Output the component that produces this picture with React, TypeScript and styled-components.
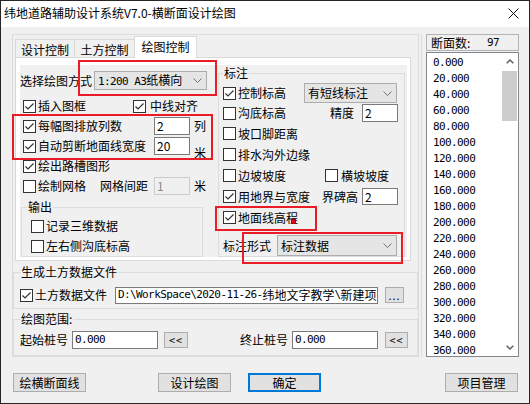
import React from "react";
import styled, { createGlobalStyle, css } from "styled-components";

const SANS = `"Noto Sans CJK SC", "Noto Sans", sans-serif`;
const MONO = `"DejaVu Sans Mono", "Liberation Mono", "Noto Sans CJK SC", monospace`;

const GlobalStyle = createGlobalStyle`
  html, body { margin: 0; padding: 0; background: #fff; }
  body { font-family: ${SANS}; font-size: 12px; color: #000; }
  *, *::before, *::after { box-sizing: border-box; }
`;

const Window = styled.div`
  position: relative;
  width: 530px;
  height: 404px;
  border: 1px solid #262626;
  background: #f0f0f0;
  display: flex;
  flex-direction: column;
  overflow: hidden;
  font-family: ${SANS};
  font-size: 12px;
  line-height: 14px;
`;

const TitleBar = styled.div`
  height: 26px;
  flex-shrink: 0;
  background: #fff;
  display: flex;
  align-items: center;
  justify-content: space-between;
  padding: 0 10px 2px 3px;
`;

const TitleText = styled.span`
  font-size: 12px;
  white-space: nowrap;
`;

const Body = styled.div`
  display: flex;
  flex-direction: column;
  padding: 7px 10px 0 11px;
`;

const Main = styled.div`
  display: flex;
  gap: 2px;
  height: 323px;
`;

const LeftFrame = styled.div`
  width: 407px;
  border: 1px solid #dcdcdc;
  display: flex;
  flex-direction: column;
`;

const TabStrip = styled.div`
  display: flex;
  align-items: flex-end;
  height: 23px;
  padding: 1px 0 0 2px;
`;

const Tab = styled.div<{ $w: number; $active?: boolean }>`
  width: ${(p) => p.$w}px;
  height: 19px;
  margin-left: -1px;
  &:first-child { margin-left: 0; }
  border: 1px solid #d9d9d9;
  border-bottom: none;
  background: #f0f0f0;
  display: flex;
  align-items: center;
  justify-content: center;
  padding-top: 1px;
  white-space: nowrap;
  ${(p) =>
    p.$active &&
    css`
      height: 22px;
      background: #fff;
      position: relative;
      z-index: 1;
      padding-top: 0;
      padding-bottom: 1px;
    `}
`;

const TabPanel = styled.div`
  margin: -1px 0 0 2px;
  width: 396px;
  border: 1px solid #d9d9d9;
  background: #fff;
  padding: 7px 3px 3px 4px;
`;

const InnerPanel = styled.div`
  display: flex;
  align-items: flex-start;
  height: 192px;
  background: #f0f0f0;
`;

const Settings = styled.div`
  width: 198px;
  display: flex;
  flex-direction: column;
  padding-top: 6px;
`;

const Rows = styled.div<{ $mt?: number; $pl?: number }>`
  display: flex;
  flex-direction: column;
  margin-top: ${(p) => p.$mt ?? 0}px;
  padding-left: ${(p) => p.$pl ?? 0}px;
`;

const Row = styled.div<{ $h?: number; $mt?: number }>`
  display: flex;
  align-items: center;
  height: ${(p) => p.$h ?? 20}px;
  margin-top: ${(p) => p.$mt ?? 0}px;
  white-space: nowrap;
`;

const Group = styled.fieldset<{ $w?: number; $h: number; $mt?: number; $ml?: number }>`
  margin: ${(p) => p.$mt ?? 0}px 0 0 ${(p) => p.$ml ?? 0}px;
  padding: 0;
  min-width: 0;
  border: 1px solid #dcdcdc;
  height: ${(p) => p.$h}px;
  ${(p) => (p.$w ? `width: ${p.$w}px;` : "")}
`;

const Legend = styled.legend<{ $ml: number }>`
  margin-left: ${(p) => p.$ml}px;
  padding: 0 1px;
  font-size: 12px;
  line-height: 12px;
  height: 12px;
  white-space: nowrap;
`;

const Label = styled.span<{ $w?: number; $ml?: number }>`
  ${(p) => (p.$w ? `width: ${p.$w}px;` : "")}
  margin-left: ${(p) => p.$ml ?? 0}px;
  flex-shrink: 0;
  white-space: nowrap;
`;

const Unit = styled.span<{ $low?: boolean }>`
  margin-left: 4px;
  ${(p) =>
    p.$low &&
    css`
      align-self: flex-end;
      margin-bottom: -4px;
    `}
`;

const CheckLabel = styled.label<{ $w?: number; $gap?: number }>`
  display: flex;
  align-items: center;
  gap: ${(p) => p.$gap ?? 2}px;
  ${(p) => (p.$w ? `width: ${p.$w}px;` : "")}
  flex-shrink: 0;
  white-space: nowrap;
`;

const Box = styled.span`
  width: 13px;
  height: 13px;
  border: 1px solid #333;
  background: #fff;
  display: inline-flex;
  align-items: center;
  justify-content: center;
  flex-shrink: 0;
`;

const Check: React.FC<{ label: string; checked?: boolean; w?: number; gap?: number }> = ({
  label,
  checked,
  w,
  gap,
}) => (
  <CheckLabel $w={w} $gap={gap}>
    <Box>
      {checked && (
        <svg width="11" height="11" viewBox="0 0 11 11">
          <polyline points="1.5,5.5 4,8 9.5,2.5" fill="none" stroke="#333" strokeWidth="1.2" />
        </svg>
      )}
    </Box>
    <span>{label}</span>
  </CheckLabel>
);

const Field = styled.div<{ $w: number; $h?: number; $disabled?: boolean }>`
  width: ${(p) => p.$w}px;
  height: ${(p) => p.$h ?? 18}px;
  flex-shrink: 0;
  border: 1px solid #7a7a7a;
  background: #fff;
  display: flex;
  align-items: center;
  padding-left: 2px;
  overflow: hidden;
  white-space: nowrap;
  ${(p) =>
    p.$disabled &&
    css`
      background: #f0f0f0;
      border-color: #cccccc;
      color: #8a8a8a;
    `}
`;

const Mono = styled.span`
  font-family: ${MONO};
  font-size: 11px;
  letter-spacing: -0.6px;
`;

const Combo = styled.div<{ $w: number; $h: number }>`
  width: ${(p) => p.$w}px;
  height: ${(p) => p.$h}px;
  flex-shrink: 0;
  border: 1px solid #adadad;
  background: #e5e5e5;
  display: flex;
  align-items: center;
  justify-content: space-between;
  padding: 0 4px 0 3px;
  white-space: nowrap;
`;

const Chevron = () => (
  <svg width="9" height="5" viewBox="0 0 9 5">
    <polyline points="0.5,0.5 4.5,4.5 8.5,0.5" fill="none" stroke="#707070" strokeWidth="1" />
  </svg>
);

const SmallButton = styled.div<{ $w: number; $h: number; $ml: number }>`
  width: ${(p) => p.$w}px;
  height: ${(p) => p.$h}px;
  margin-left: ${(p) => p.$ml}px;
  flex-shrink: 0;
  border: 1px solid #adadad;
  background: #e1e1e1;
  display: flex;
  align-items: center;
  justify-content: center;
  font-size: 11px;
  letter-spacing: 1px;
`;

const GroupContent = styled.div<{ $pl: number; $pt: number }>`
  padding-left: ${(p) => p.$pl}px;
  padding-top: ${(p) => p.$pt}px;
`;

const RightCol = styled.div`
  width: 98px;
  border-left: 1px solid #dcdcdc;
  padding-left: 4px;
  display: flex;
  flex-direction: column;
`;

const CountBox = styled.div`
  height: 17px;
  border: 1px solid #b4b4b4;
  display: flex;
  align-items: center;
  padding-left: 4px;
  flex-shrink: 0;
`;

const ListBox = styled.div`
  margin-top: 1px;
  flex: 1;
  border: 1px solid #828790;
  background: #fff;
  display: flex;
  overflow: hidden;
`;

const Items = styled.div`
  flex: 1;
  padding: 2px 0 0 6px;
  overflow: hidden;
`;

const Item = styled.div`
  height: 16px;
  display: flex;
  align-items: center;
`;

const ScrollBar = styled.div`
  width: 17px;
  display: flex;
  flex-direction: column;
  background: #fff;
`;

const ArrowBox = styled.div`
  height: 17px;
  display: flex;
  align-items: center;
  justify-content: center;
  flex-shrink: 0;
`;

const Thumb = styled.div`
  margin: 1px 1px 0 1px;
  height: 50px;
  background: #cdcdcd;
`;

const Spacer = styled.div`
  flex: 1;
`;

const ButtonRow = styled.div`
  display: flex;
  margin-top: 16px;
  padding: 0 1px;
`;

const Button = styled.div<{ $ml?: number; $auto?: boolean; $primary?: boolean }>`
  width: 73px;
  height: 19px;
  margin-left: ${(p) => (p.$auto ? "auto" : `${p.$ml ?? 0}px`)};
  border: 1px solid #adadad;
  background: #e1e1e1;
  display: flex;
  align-items: center;
  justify-content: center;
  white-space: nowrap;
  ${(p) =>
    p.$primary &&
    css`
      border: 2px solid #0078d7;
    `}
`;

const Highlight = styled.div<{ $x: number; $y: number; $w: number; $h: number }>`
  position: absolute;
  left: ${(p) => p.$x - 1}px;
  top: ${(p) => p.$y - 1}px;
  width: ${(p) => p.$w}px;
  height: ${(p) => p.$h}px;
  border: 2px solid #e81d25;
  pointer-events: none;
`;

const Dot = styled.div<{ $x: number; $y: number }>`
  position: absolute;
  left: ${(p) => p.$x - 1}px;
  top: ${(p) => p.$y - 1}px;
  width: 5px;
  height: 5px;
  background: #e0101c;
  border: 1px solid #b00010;
`;

const CloseIcon = () => (
  <svg width="11" height="11" viewBox="0 0 11 11">
    <path d="M0.5 0.5 L10.5 10.5 M10.5 0.5 L0.5 10.5" stroke="#111" strokeWidth="1" />
  </svg>
);

const stations = Array.from({ length: 19 }, (_, i) => (i * 20).toFixed(3));

export default function App() {
  return (
    <>
      <GlobalStyle />
      <Window>
        <TitleBar>
          <TitleText>纬地道路辅助设计系统V7.0-横断面设计绘图</TitleText>
          <CloseIcon />
        </TitleBar>
        <Body>
          <Main>
            <LeftFrame>
              <TabStrip>
                <Tab $w={60}>设计控制</Tab>
                <Tab $w={61}>土方控制</Tab>
                <Tab $w={63} $active>
                  绘图控制
                </Tab>
              </TabStrip>
              <TabPanel>
                <InnerPanel>
                  <Settings>
                    <Row $h={19}>
                      <Label $w={74}>选择绘图方式</Label>
                      <Combo $w={113} $h={19}>
                        <span>
                          <Mono>1:200 A3</Mono>纸横向
                        </span>
                        <Chevron />
                      </Combo>
                    </Row>
                    <Rows $mt={6} $pl={3}>
                      <Row>
                        <Check label="插入图框" checked w={110} />
                        <Check label="中线对齐" checked gap={4} />
                      </Row>
                      <Row>
                        <Check label="每幅图排放列数" checked w={131} />
                        <Field $w={36}>2</Field>
                        <Unit>列</Unit>
                      </Row>
                      <Row>
                        <Check label="自动剪断地面线宽度" checked w={131} />
                        <Field $w={36}>20</Field>
                        <Unit $low>米</Unit>
                      </Row>
                      <Row>
                        <Check label="绘出路槽图形" checked />
                      </Row>
                      <Row>
                        <Check label="绘制网格" w={77} />
                        <Label $w={54}>网格间距</Label>
                        <Field $w={36} $disabled>
                          1
                        </Field>
                        <Unit>米</Unit>
                      </Row>
                    </Rows>
                    <Group $w={182} $h={56} $mt={5} $ml={1}>
                      <Legend $ml={5}>输出</Legend>
                      <GroupContent $pl={9} $pt={3}>
                        <Row>
                          <Check label="记录三维数据" />
                        </Row>
                        <Row>
                          <Check label="左右侧沟底标高" />
                        </Row>
                      </GroupContent>
                    </Group>
                  </Settings>
                  <Group $w={187} $h={190} $mt={2}>
                    <Legend $ml={4}>标注</Legend>
                    <GroupContent $pl={4} $pt={4}>
                      <Row>
                        <Check label="控制标高" checked w={81} />
                        <Combo $w={93} $h={20}>
                          <span>有短线标注</span>
                          <Chevron />
                        </Combo>
                      </Row>
                      <Row>
                        <Check label="沟底标高" w={107} />
                        <Label $w={32}>精度</Label>
                        <Field $w={36}>2</Field>
                      </Row>
                      <Row $h={21}>
                        <Check label="坡口脚距离" />
                      </Row>
                      <Row $h={21}>
                        <Check label="排水沟外边缘" />
                      </Row>
                      <Row $h={21}>
                        <Check label="边坡坡度" w={102} />
                        <Check label="横坡坡度" gap={3} />
                      </Row>
                      <Row $h={21}>
                        <Check label="用地界与宽度" checked w={99} />
                        <Label $w={40}>界碑高</Label>
                        <Field $w={36} $h={17}>
                          2
                        </Field>
                      </Row>
                      <Row $h={21}>
                        <Check label="地面线高程" checked />
                      </Row>
                      <Row $h={21} $mt={7}>
                        <Label $w={54}>标注形式</Label>
                        <Combo $w={120} $h={21}>
                          <span>标注数据</span>
                          <Chevron />
                        </Combo>
                      </Row>
                    </GroupContent>
                  </Group>
                </InnerPanel>
              </TabPanel>
              <Group $h={43} $mt={5}>
                <Legend $ml={6}>生成土方数据文件</Legend>
                <GroupContent $pl={6} $pt={7}>
                  <Row>
                    <Check label="土方数据文件" checked w={95} />
                    <Field $w={263} $h={17}>
                      <Mono>{"D:\\WorkSpace\\2020-11-26-"}</Mono>
                      纬地文字教学
                      <Mono>{"\\"}</Mono>
                      新建项
                    </Field>
                    <SmallButton $w={19} $h={16} $ml={7}>
                      ...
                    </SmallButton>
                  </Row>
                </GroupContent>
              </Group>
              <Group $h={43} $mt={4}>
                <Legend $ml={6}>绘图范围:</Legend>
                <GroupContent $pl={6} $pt={5}>
                  <Row>
                    <Label $w={52}>起始桩号</Label>
                    <Field $w={86} $h={18}>
                      <Mono>0.000</Mono>
                    </Field>
                    <SmallButton $w={24} $h={16} $ml={6}>
                      {"<<"}
                    </SmallButton>
                    <Label $w={52} $ml={52}>
                      终止桩号
                    </Label>
                    <Field $w={86} $h={18}>
                      <Mono>0.000</Mono>
                    </Field>
                    <SmallButton $w={23} $h={16} $ml={7}>
                      {"<<"}
                    </SmallButton>
                  </Row>
                </GroupContent>
              </Group>
            </LeftFrame>
            <RightCol>
              <CountBox>
                <Label $w={56}>断面数:</Label>
                <Mono>97</Mono>
              </CountBox>
              <ListBox>
                <Items>
                  {stations.map((s) => (
                    <Item key={s}>
                      <Mono>{s}</Mono>
                    </Item>
                  ))}
                </Items>
                <ScrollBar>
                  <ArrowBox>
                    <svg width="8" height="5" viewBox="0 0 8 5">
                      <polyline points="0.7,4.3 4,1 7.3,4.3" fill="none" stroke="#606060" strokeWidth="1.5" />
                    </svg>
                  </ArrowBox>
                  <Thumb />
                  <Spacer />
                  <ArrowBox>
                    <svg width="8" height="5" viewBox="0 0 8 5">
                      <polyline points="0.7,0.7 4,4 7.3,0.7" fill="none" stroke="#606060" strokeWidth="1.5" />
                    </svg>
                  </ArrowBox>
                </ScrollBar>
              </ListBox>
            </RightCol>
          </Main>
          <ButtonRow>
            <Button>绘横断面线</Button>
            <Button $ml={72}>设计绘图</Button>
            <Button $ml={17} $primary>
              确定
            </Button>
            <Button $auto>项目管理</Button>
          </ButtonRow>
        </Body>
        <Highlight $x={78} $y={60} $w={139} $h={36} />
        <Highlight $x={12} $y={114} $w={201} $h={46} />
        <Highlight $x={215} $y={206} $w={102} $h={25} />
        <Highlight $x={242} $y={232} $w={161} $h={32} />
        <Dot $x={291} $y={219} />
      </Window>
    </>
  );
}
